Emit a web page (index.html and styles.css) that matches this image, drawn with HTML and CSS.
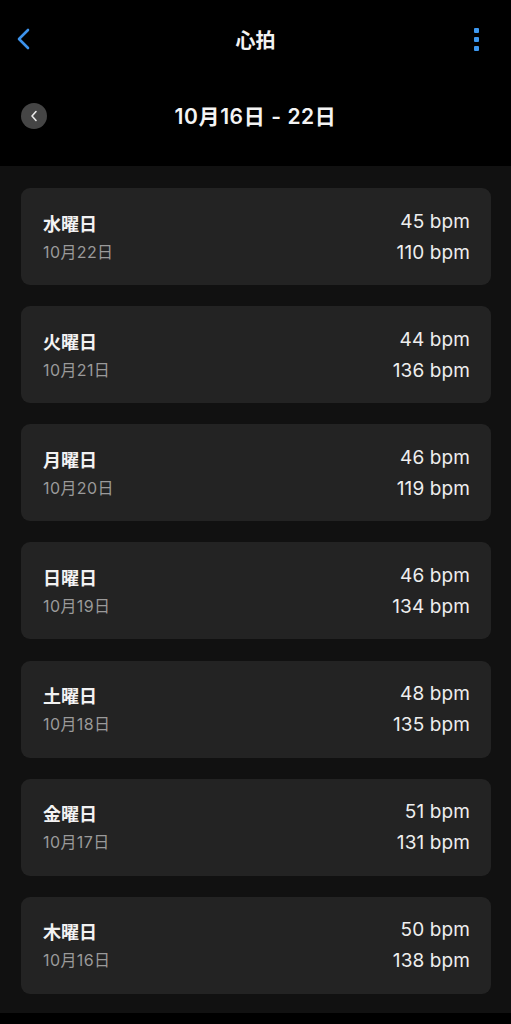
FILE: index.html
```html
<!DOCTYPE html>
<html lang="ja">
<head>
<meta charset="utf-8">
<title>心拍</title>
<link rel="stylesheet" href="styles.css">
</head>
<body>
<header class="header">
  <div class="nav">
    <div class="nav-left">
      <svg class="back" width="14" height="22" viewBox="0 0 14 22"><polyline points="12,2 3,11 12,20" fill="none" stroke="#3d93ec" stroke-width="2.6" stroke-linecap="round" stroke-linejoin="round"/></svg>
    </div>
    <div class="nav-title">心拍</div>
    <div class="nav-right">
      <div class="dots"><span></span><span></span><span></span></div>
    </div>
  </div>
  <div class="week">
    <div class="week-left">
      <div class="circle-btn">
        <svg width="8" height="12" viewBox="0 0 8 12"><polyline points="6,1.5 2,6 6,10.5" fill="none" stroke="#e8e8e8" stroke-width="1.6" stroke-linecap="round" stroke-linejoin="round"/></svg>
      </div>
    </div>
    <div class="week-title">10月16日 - 22日</div>
    <div></div>
  </div>
</header>
<main class="list">
  <div class="card"><div class="col-left"><div class="day">水曜日</div><div class="date">10月22日</div></div><div class="col-right"><div class="bpm">45 bpm</div><div class="bpm">110 bpm</div></div></div>
  <div class="card"><div class="col-left"><div class="day">火曜日</div><div class="date">10月21日</div></div><div class="col-right"><div class="bpm">44 bpm</div><div class="bpm">136 bpm</div></div></div>
  <div class="card"><div class="col-left"><div class="day">月曜日</div><div class="date">10月20日</div></div><div class="col-right"><div class="bpm">46 bpm</div><div class="bpm">119 bpm</div></div></div>
  <div class="card"><div class="col-left"><div class="day">日曜日</div><div class="date">10月19日</div></div><div class="col-right"><div class="bpm">46 bpm</div><div class="bpm">134 bpm</div></div></div>
  <div class="card"><div class="col-left"><div class="day">土曜日</div><div class="date">10月18日</div></div><div class="col-right"><div class="bpm">48 bpm</div><div class="bpm">135 bpm</div></div></div>
  <div class="card"><div class="col-left"><div class="day">金曜日</div><div class="date">10月17日</div></div><div class="col-right"><div class="bpm">51 bpm</div><div class="bpm">131 bpm</div></div></div>
  <div class="card"><div class="col-left"><div class="day">木曜日</div><div class="date">10月16日</div></div><div class="col-right"><div class="bpm">50 bpm</div><div class="bpm">138 bpm</div></div></div>
</main>
</body>
</html>
```

FILE: styles.css
```css
* { box-sizing: border-box; }
html, body {
  margin: 0;
  padding: 0;
  background: #000;
  color: #f2f2f2;
  font-family: "Inter", "Noto Sans CJK JP", sans-serif;
}
body { min-height: 1024px; }

.header {
  background: #000;
  padding-bottom: 12px;
}
.nav {
  height: 78px;
  display: grid;
  grid-template-columns: 1fr auto 1fr;
  align-items: center;
}
.nav-left {
  padding-left: 16px;
  display: flex;
  align-items: center;
}
.back { display: block; }
.nav-title {
  font-size: 20px;
  font-weight: 600;
  color: #f2f2f2;
  padding-top: 1px;
}
.nav-right {
  display: flex;
  justify-content: flex-end;
  padding-right: 32px;
}
.dots {
  display: flex;
  flex-direction: column;
  gap: 4px;
  padding-top: 1px;
}
.dots span {
  width: 5px;
  height: 5px;
  background: #3d98f0;
  border-radius: 1px;
}

.week {
  height: 76px;
  display: grid;
  grid-template-columns: 1fr auto 1fr;
  align-items: center;
}
.week-left {
  padding-left: 21px;
  display: flex;
}
.circle-btn {
  width: 26px;
  height: 26px;
  border-radius: 50%;
  background: #454545;
  display: flex;
  align-items: center;
  justify-content: center;
}
.circle-btn svg { display: block; margin-left: -1px; }
.week-title {
  font-size: 21px;
  font-weight: 600;
  color: #f4f4f4;
  letter-spacing: 0.6px;
  margin-top: -2px;
}

.list {
  background: #111111;
  padding: 22px 20px 19px 21px;
  display: flex;
  flex-direction: column;
  gap: 21.15px;
}
.card {
  height: 97px;
  background: #232323;
  border-radius: 9px;
  padding: 0 21px 0 22px;
  display: flex;
  justify-content: space-between;
  align-items: center;
}
.col-left, .col-right {
  display: flex;
  flex-direction: column;
}
.col-right { align-items: flex-end; }
.day {
  height: 29px;
  line-height: 29px;
  font-size: 18px;
  font-weight: 700;
  color: #f2f2f2;
  padding-top: 2px;
}
.date {
  height: 29px;
  line-height: 29px;
  font-size: 16px;
  color: #9a9a9a;
  letter-spacing: 0.4px;
  padding-top: 1px;
}
.bpm {
  height: 31px;
  line-height: 31px;
  font-size: 19px;
  color: #eeeeee;
  letter-spacing: 0.1px;
}
```
